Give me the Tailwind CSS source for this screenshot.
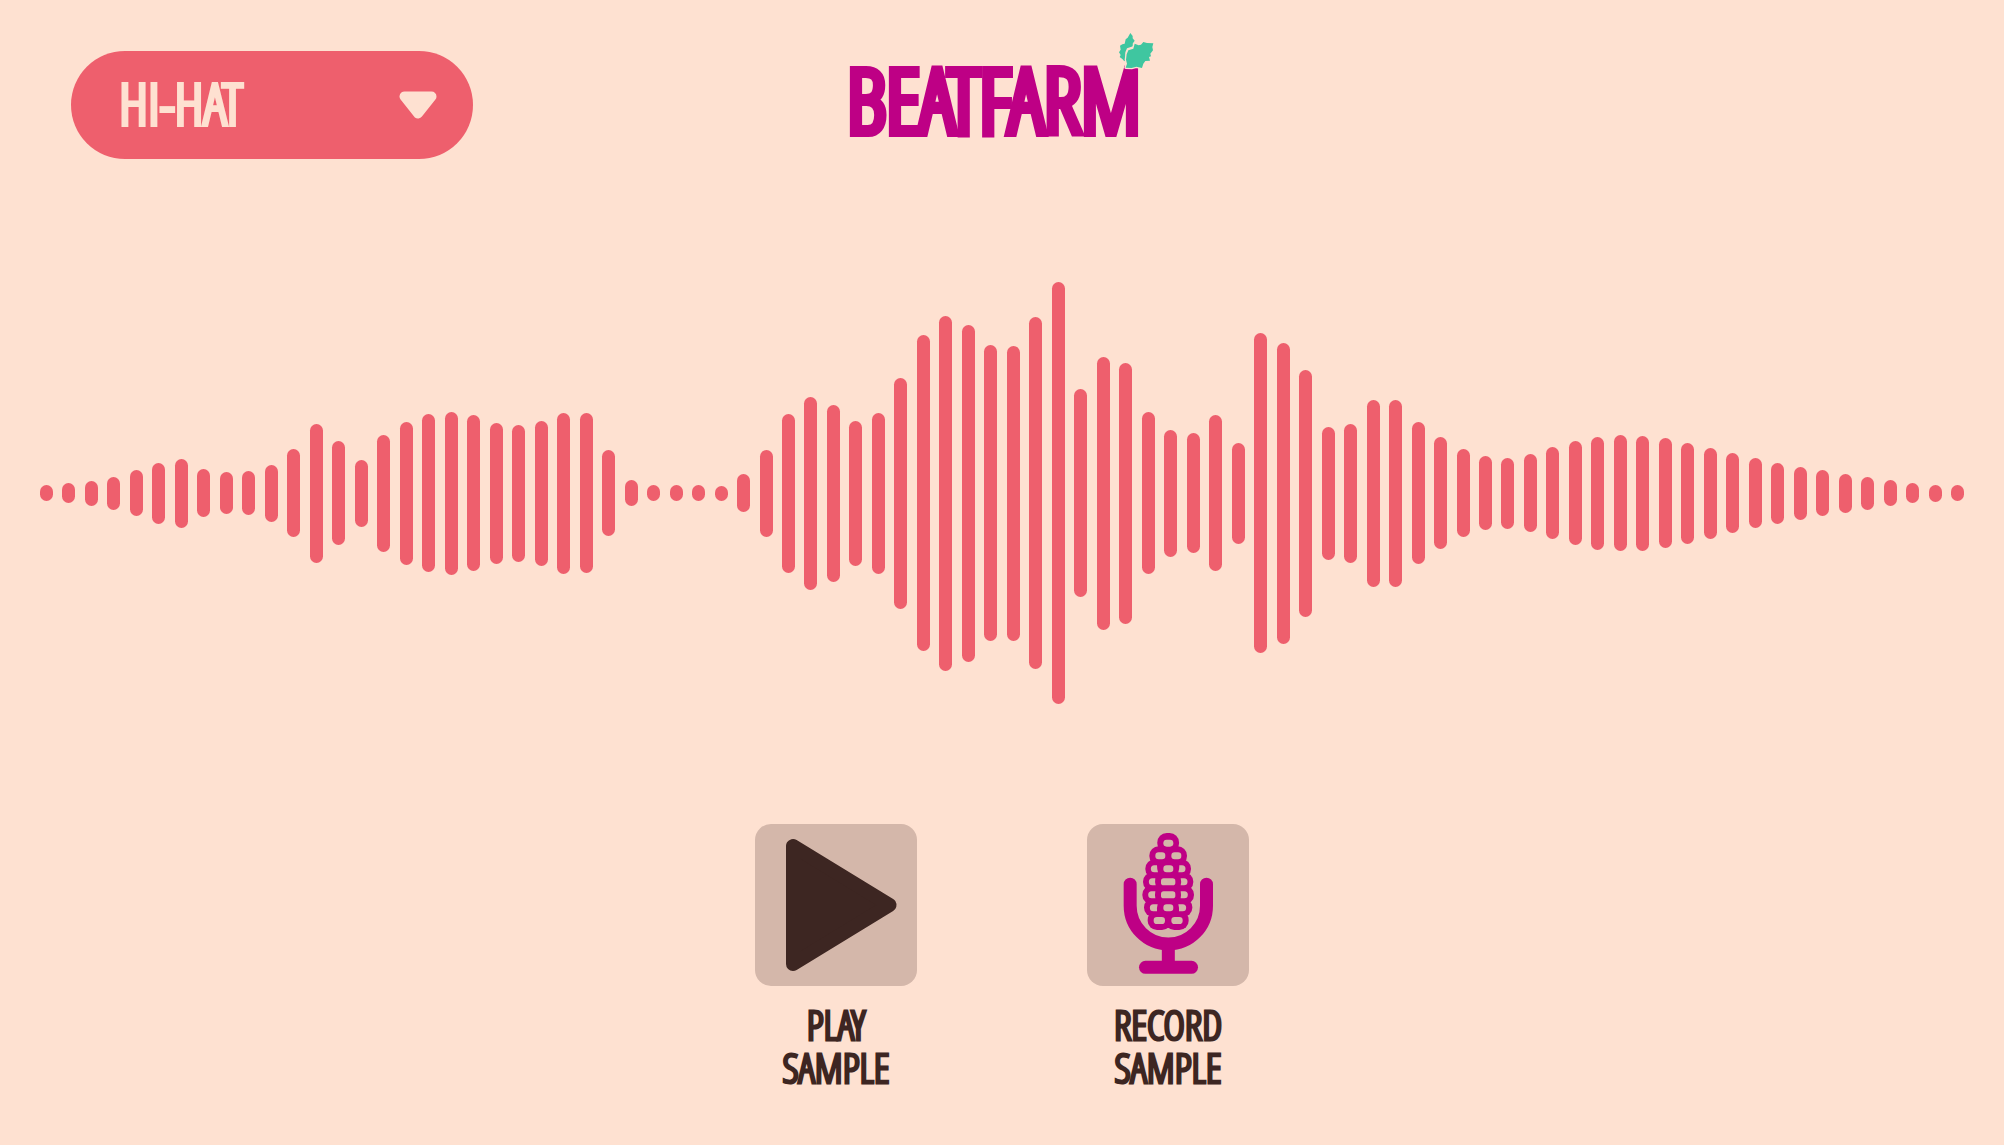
<!DOCTYPE html>
<html lang="en">
<head>
<meta charset="utf-8">
<meta name="viewport" content="width=device-width, initial-scale=1">
<title>Beatfarm</title>
<script src="https://cdn.jsdelivr.net/npm/@tailwindcss/browser@4"></script>
</head>
<body class="min-h-screen bg-[#fee1d1] font-['Open_Sans_Condensed_Light','Open_Sans_Condensed','Open_Sans',sans-serif] text-[#3d2622] font-light [stroke-linejoin:round]">
<header class="grid grid-cols-[1fr_auto_1fr] items-start pt-[51px] px-[71px]">
  <div class="relative w-[402px]">
    <select id="sample" aria-label="Sample" class="h-[108px] w-full appearance-none rounded-full bg-[#ee5f6d] pb-1 pl-12 pr-24 text-[58px] font-light leading-none text-[#fee1d1] [-webkit-text-stroke:4px_#fee1d1]">
      <option>HI-HAT</option>
    </select>
    <svg class="pointer-events-none absolute right-9 top-10 h-7 w-[38px]" viewBox="0 0 38 28" aria-hidden="true">
      <path d="M5.500 5.500h27L19 22.500z" fill="#fee1d1" stroke="#fee1d1" stroke-width="10" stroke-linejoin="round"/>
    </svg>
  </div>
  <h1 class="relative mr-4 text-[88px] font-light leading-[96px] text-[#be0085] [-webkit-text-stroke:8px_#be0085]">BEATFARM
    <svg class="absolute -right-4 -top-5 h-10 w-10" viewBox="50 20 120 120" aria-hidden="true">
      <g fill="#3fc6a0" stroke="#fee1d1" stroke-width="8" stroke-linejoin="round" paint-order="stroke">
        <path d="M90 26L97 35L97 42L103 49L97 58L98 66L80 72L75 84L76 108L72 111L66 104L58 98L61 92L56 84L61 76L59 64L66 60L73 58L76 45L82 40z"/>
        <path d="M103 58L115 63L122 61L129 53L140 56L159 57L156 68L158 78L150 88L152 96L146 98L149 109L135 110L129 118L125 131L108 127L94 131L76 130L80 118L77 106L79 90L84 78L99 73z"/>
      </g>
    </svg>
  </h1>
</header>
<main>
  <div id="wave" role="img" aria-label="Waveform" class="mt-[123px] flex h-[422px] items-center justify-between pl-10 pr-[39px]"></div>
  <div class="mt-[120px] flex justify-center gap-[170px] pb-12">
    <button type="button" class="flex w-[162px] flex-col items-center gap-[17px] text-[41px] font-light leading-[43px] [-webkit-text-stroke:3px_#3d2622]">
      <svg class="size-[162px] rounded-2xl bg-[#d4b7aa]" viewBox="0 0 162 162" aria-hidden="true">
        <path d="M38 22v118L134.500 81z" fill="#3d2622" stroke="#3d2622" stroke-width="14" stroke-linejoin="round"/>
      </svg>
      <span>PLAY<br>SAMPLE</span>
    </button>
    <button type="button" class="flex w-[162px] flex-col items-center gap-[17px] text-[41px] font-light leading-[43px] [-webkit-text-stroke:3px_#3d2622]">
      <svg class="size-[162px] rounded-2xl bg-[#d4b7aa]" viewBox="36 42 486 486" aria-hidden="true">
        <g fill="none" stroke="#be0085" stroke-width="39" stroke-linecap="round">
          <path d="M165.500 222.500V287a114.500 115 0 0 0 229 0V222.500"/>
          <path d="M280 402V472" stroke-linecap="butt"/>
          <path d="M211.500 472H349.500"/>
        </g>
        <g fill="#be0085">
          <rect x="247" y="69" width="65" height="60" rx="28"/>
          <rect x="223" y="109" width="113" height="57" rx="28"/>
          <rect x="211" y="148" width="137" height="57" rx="28"/>
          <rect x="204" y="187" width="151" height="57" rx="28"/>
          <rect x="202" y="226" width="155" height="57" rx="28"/>
          <rect x="207" y="264" width="145" height="57" rx="28"/>
          <rect x="218" y="302" width="71" height="58" rx="28"/>
          <rect x="270" y="302" width="71" height="58" rx="28"/>
        </g>
        <g fill="#d4b7aa">
          <rect x="265" y="89" width="30" height="21" rx="10"/>
          <rect x="241" y="127" width="30" height="21" rx="10"/>
          <rect x="289" y="127" width="30" height="21" rx="10"/>
          <rect x="265" y="166" width="30" height="21" rx="10"/>
          <rect x="258" y="205" width="43" height="21" rx="8"/>
          <rect x="258" y="244" width="43" height="21" rx="8"/>
          <rect x="265" y="283" width="30" height="21" rx="10"/>
          <rect x="236" y="321" width="34" height="21" rx="10"/>
          <rect x="289" y="321" width="34" height="21" rx="10"/>
          <path d="M246 166h-8a10.500 10.500 0 0 0 0 21h11q-3-10-3-21zM313 166h8a10.500 10.500 0 0 1 0 21h-11q3-10 3-21z"/>
          <path d="M241 205h-9a10.500 10.500 0 0 0 0 21h10q-3-10-1-21zM317 205h10a10.500 10.500 0 0 1 0 21h-10q3-10 0-21z"/>
          <path d="M241 244h-11a10.500 10.500 0 0 0 0 21h11q-2-10 0-21zM317 244h11a10.500 10.500 0 0 1 0 21h-11q2-10 0-21z"/>
          <path d="M248 283h-13a10.500 10.500 0 0 0 0 21h11q-1-10 2-21zM310 283h13a10.500 10.500 0 0 1 0 21h-11q1-10-2-21z"/>
        </g>
      </svg>
      <span>RECORD<br>SAMPLE</span>
    </button>
  </div>
</main>
<script>
const levels = [16,20,25,33,46,61,69,48,42,44,57,88,139,104,67,117,143,158,163,156,141,137,145,161,160,86,26,16,16,16,15,38,87,159,193,177,145,161,231,316,355,337,296,295,352,422,208,273,261,162,127,120,156,101,320,301,247,133,139,187,187,142,112,88,74,71,78,92,104,113,116,115,110,101,91,80,70,61,53,46,39,33,26,20,17,16];
const wave = document.getElementById('wave');
for (const level of levels) {
  const bar = document.createElement('span');
  bar.className = 'w-[13px] rounded-full bg-[#ee5f6d]';
  bar.style.height = level + 'px';
  wave.append(bar);
}
</script>
</body>
</html>
